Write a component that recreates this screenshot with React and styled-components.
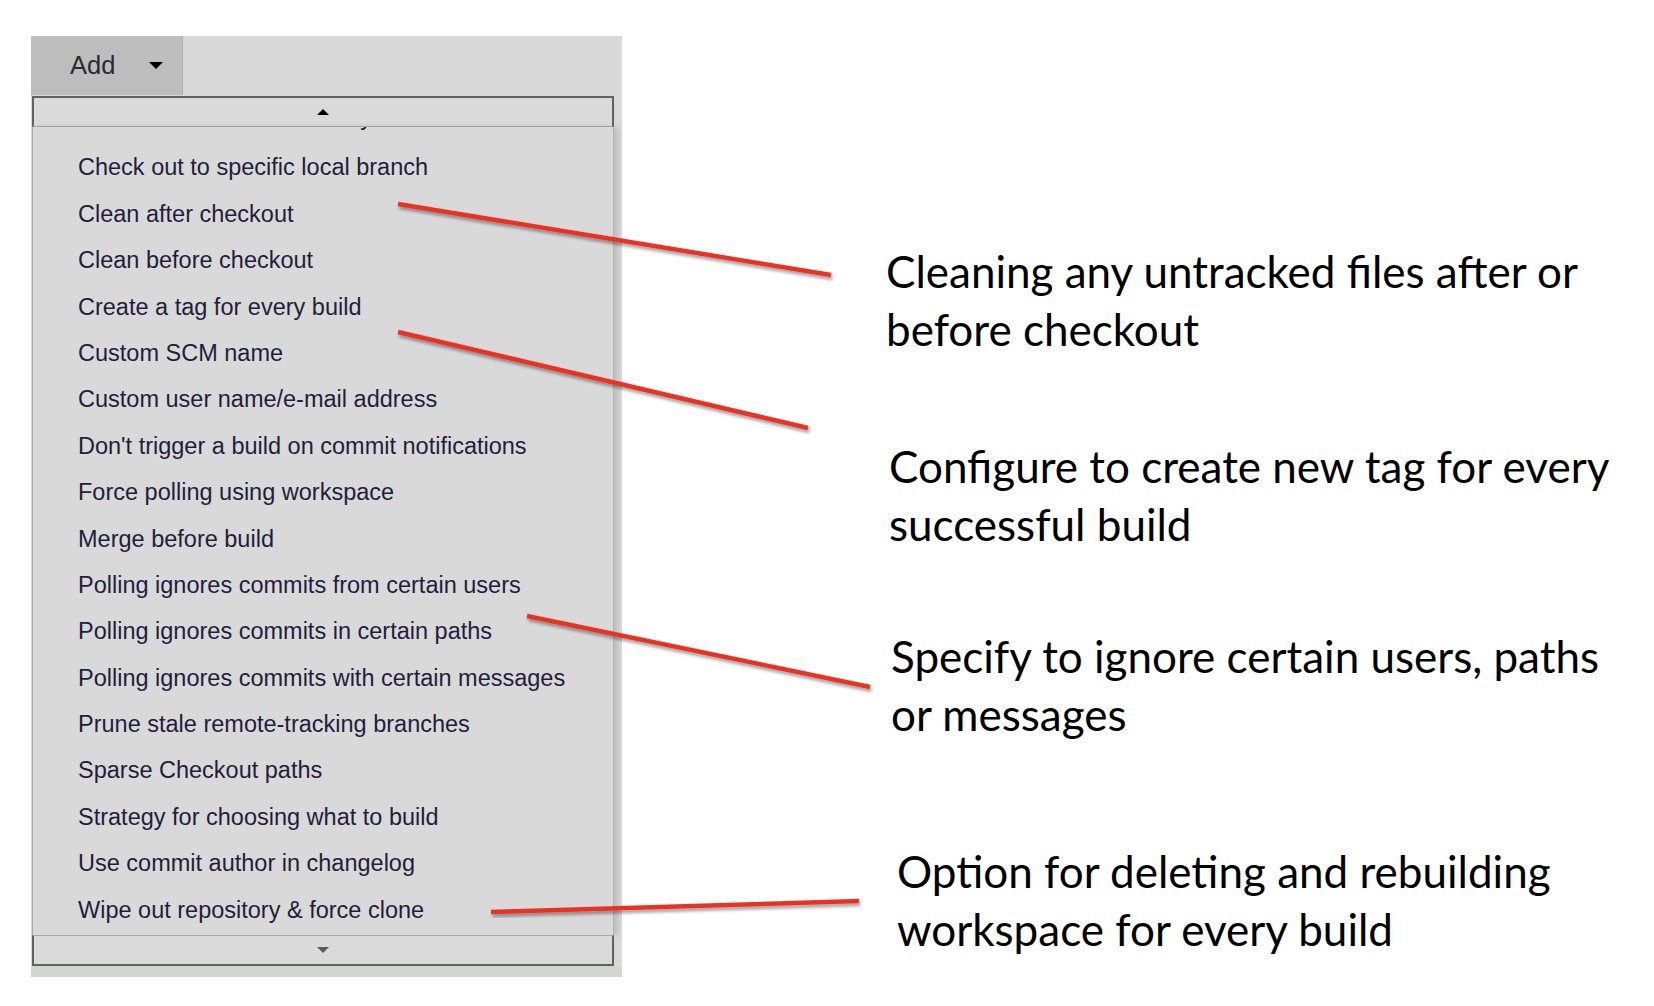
import React from 'react'
import styled, { createGlobalStyle } from 'styled-components'

const GlobalStyle = createGlobalStyle`
    html, body {
        margin: 0;
        padding: 0;
        background: #ffffff;
    }
    * {
        box-sizing: border-box;
    }
`

const Page = styled.div`
    position: relative;
    width: 1654px;
    height: 1006px;
    background: #ffffff;
    display: flex;
    align-items: flex-start;
    overflow: hidden;
`

const Panel = styled.div`
    margin: 36px 0 0 31px;
    width: 591px;
    background: #d9d9d9;
    display: flex;
    flex-direction: column;
    font-family: "Liberation Sans", Arial, sans-serif;
`

const Toolbar = styled.div`
    display: flex;
    height: 60px;
`

const AddButton = styled.div`
    width: 152px;
    height: 59px;
    background: #bdbdbd;
    border-right: 1px solid #adadad;
    display: flex;
    align-items: center;
    padding-left: 39px;
    gap: 34px;
    font-size: 25.5px;
    color: #2a2a33;
`

const Caret = styled.span`
    display: block;
    width: 0;
    height: 0;
    border-left: ${p => p.size}px solid transparent;
    border-right: ${p => p.size}px solid transparent;
    ${p => (p.up ? 'border-bottom' : 'border-top')}: ${p => p.size}px solid ${p => p.color || '#000'};
`

const Dropdown = styled.div`
    margin-left: 1px;
    width: 582px;
    display: flex;
    flex-direction: column;
`

const ScrollCap = styled.div`
    height: 31px;
    background: #dadada;
    display: flex;
    align-items: center;
    justify-content: center;
    border: 2px solid #616161;
    ${p => (p.top ? 'border-bottom: 1px solid #ababab;' : 'border-top: 1px solid #ababab;')}
`

const List = styled.div`
    height: 808px;
    overflow: hidden;
    background: #d9d9d9;
    border-left: 1px solid #a9a9a9;
    border-right: 1px solid #b4b4b4;
    box-shadow: 4px 0 5px rgba(0, 0, 0, 0.13);
`

const Items = styled.div`
    margin-top: -29px;
    display: flex;
    flex-direction: column;
`

const Item = styled.div`
    height: 46.4px;
    line-height: ${p => (p.peek ? '38px' : '46.4px')};
    padding-left: 45px;
    font-size: 23.5px;
    color: #1f1e3c;
    white-space: nowrap;
    overflow: hidden;
`

const BottomStrip = styled.div`
    height: 11px;
    background: #d3d5cf;
`

const Notes = styled.div`
    margin-left: 264px;
    display: flex;
    flex-direction: column;
    font-family: Lato, "Open Sans", sans-serif;
    font-size: 44px;
    line-height: 58px;
    color: #000;
`

const Note = styled.div`
    margin-top: ${p => p.gap}px;
    padding-left: ${p => p.indent}px;
    white-space: nowrap;
`

const Overlay = styled.svg`
    position: absolute;
    left: 0;
    top: 0;
    pointer-events: none;
`

const items = [
    'Check out to a sub-directory',
    'Check out to specific local branch',
    'Clean after checkout',
    'Clean before checkout',
    'Create a tag for every build',
    'Custom SCM name',
    'Custom user name/e-mail address',
    "Don't trigger a build on commit notifications",
    'Force polling using workspace',
    'Merge before build',
    'Polling ignores commits from certain users',
    'Polling ignores commits in certain paths',
    'Polling ignores commits with certain messages',
    'Prune stale remote-tracking branches',
    'Sparse Checkout paths',
    'Strategy for choosing what to build',
    'Use commit author in changelog',
    'Wipe out repository & force clone',
]

const notes = [
    { gap: 242, indent: 0, lines: ['Cleaning any untracked files after or', 'before checkout'] },
    { gap: 79, indent: 3, lines: ['Configure to create new tag for every', 'successful build'] },
    { gap: 74, indent: 5, lines: ['Specify to ignore certain users, paths', 'or messages'] },
    { gap: 99, indent: 11, lines: ['Option for deleting and rebuilding', 'workspace for every build'] },
]

const pointers = [
    [398, 204, 831, 275],
    [398, 332, 808, 428],
    [527, 616, 870, 687],
    [491, 912, 859, 901],
]

function App() {
    return (
        <>
            <GlobalStyle />
            <Page>
                <Panel>
                    <Toolbar>
                        <AddButton>
                            <span>Add</span>
                            <Caret size={7} />
                        </AddButton>
                    </Toolbar>
                    <Dropdown>
                        <ScrollCap top>
                            <Caret up size={6} />
                        </ScrollCap>
                        <List>
                            <Items>
                                {items.map((label, i) => (
                                    <Item key={label} peek={i === 0}>{label}</Item>
                                ))}
                            </Items>
                        </List>
                        <ScrollCap>
                            <Caret size={6} color="#5a5a5a" />
                        </ScrollCap>
                    </Dropdown>
                    <BottomStrip />
                </Panel>

                <Notes>
                    {notes.map(n => (
                        <Note key={n.lines[0]} gap={n.gap} indent={n.indent}>
                            {n.lines.map(l => (
                                <div key={l}>{l}</div>
                            ))}
                        </Note>
                    ))}
                </Notes>

                <Overlay width="1654" height="1006" viewBox="0 0 1654 1006">
                    <defs>
                        <filter id="lineShadow" x="-10%" y="-50%" width="120%" height="200%">
                            <feDropShadow dx="1.5" dy="3" stdDeviation="1.8" floodColor="#000" floodOpacity="0.35" />
                        </filter>
                    </defs>
                    {pointers.map(([x1, y1, x2, y2]) => (
                        <line
                            key={x1 + '-' + y1}
                            x1={x1}
                            y1={y1}
                            x2={x2}
                            y2={y2}
                            stroke="#ea3323"
                            strokeWidth="4.5"
                            filter="url(#lineShadow)"
                        />
                    ))}
                </Overlay>
            </Page>
        </>
    )
}

export default App
